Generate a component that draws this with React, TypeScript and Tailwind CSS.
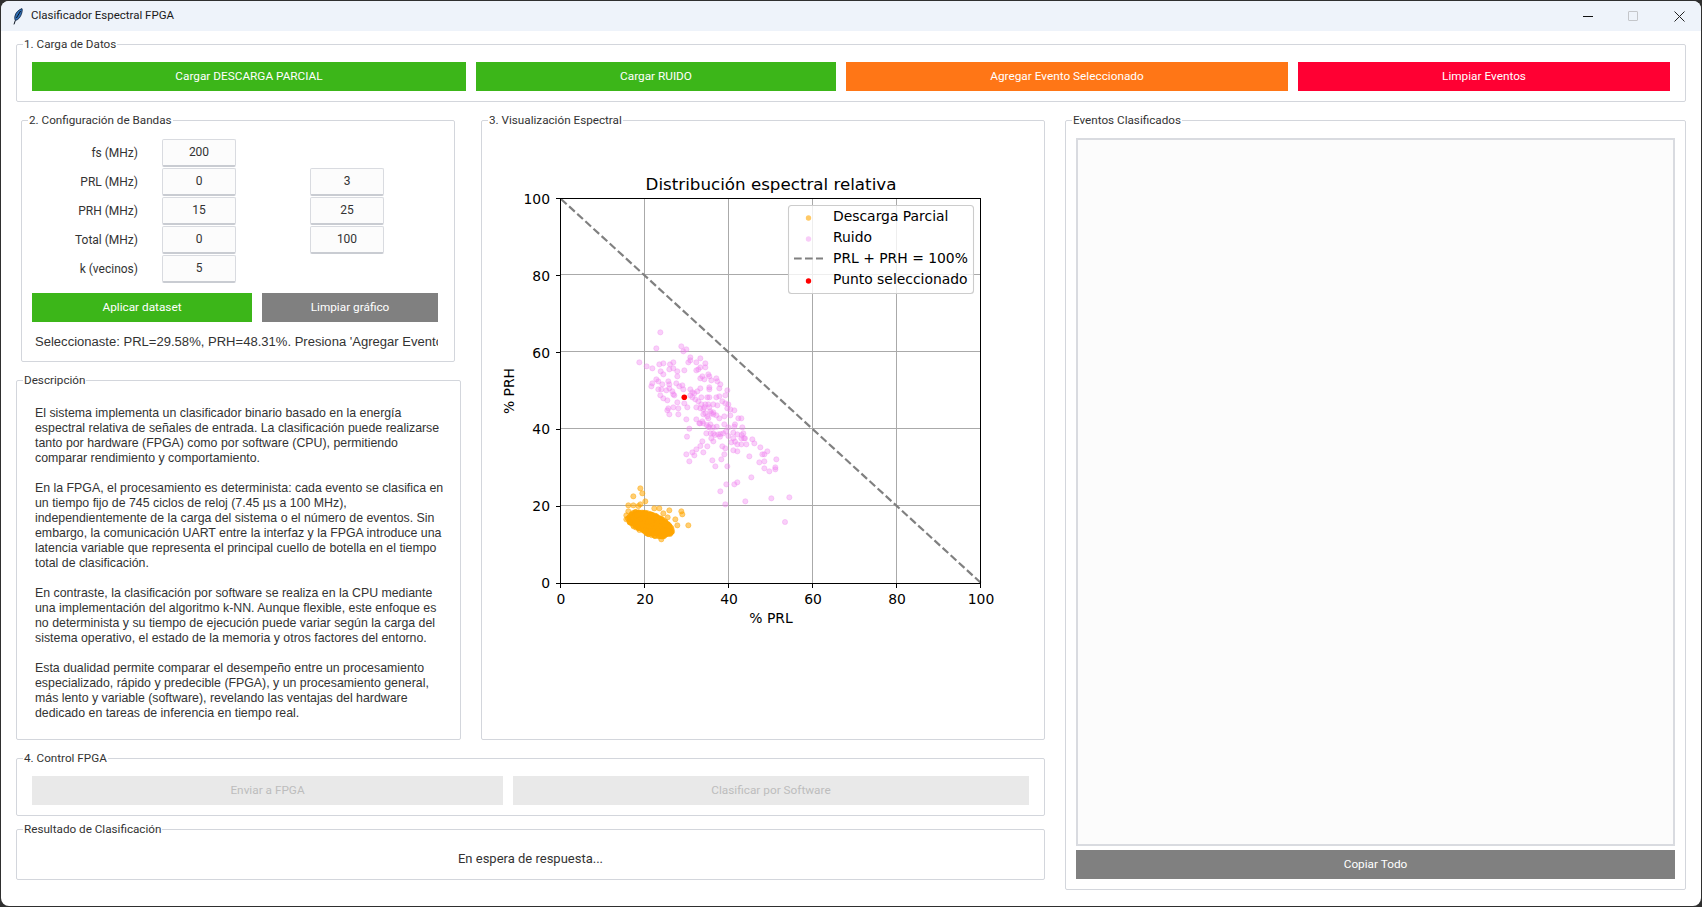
const uiFont = 'font-["Roboto",sans-serif]'

const pinkZoom: [number, number][] = [
  [121,67],[109,115],[184,109],[199,118],[190,124],[58,157],[80,169],[97,175],[118,163],[130,160],[150,163],[160,157],
  [148,178],[160,175],[172,184],[193,181],[172,199],[122,184],[130,193],[109,208],[115,214],[97,220],[94,229],[115,238],
  [124,238],[127,223],[145,214],[148,223],[148,235],[139,241],[121,256],[130,265],[142,271],[157,244],[163,256],[169,220],
  [178,229],[187,226],[190,238],[160,253],[172,277],[193,280],[202,292],[175,295],[160,292],[145,295],[142,301],[148,313],
  [175,313],[199,328],[211,238],[205,157],[211,142],[211,151],[229,157],[241,145],[256,160],[256,172],[241,172],[235,178],
  [229,181],[241,205],[247,199],[253,208],[265,193],[268,199],[274,211],[289,205],[292,214],[301,223],[298,235],[322,241],
  [268,232],[268,238],[241,235],[232,244],[223,250],[217,247],[211,256],[217,262],[226,268],[235,274],[244,262],[262,262],
  [268,262],[289,262],[298,259],[316,256],[307,274],[316,280],[325,283],[331,298],[343,301],[322,295],[292,286],[280,283],
  [265,283],[256,283],[253,292],[250,298],[241,295],[229,292],[244,283],[268,292],[271,304],[274,310],[280,313],[289,316],
  [298,325],[313,319],[331,316],[280,307],[256,310],[250,313],[262,319],[265,325],[229,328],[238,340],[250,340],[247,334],
  [271,343],[280,352],[268,352],[259,370],[272,370],[295,373],[302,372],[310,370],[318,364],[313,343],[325,352],[345,343],
  [343,350],[355,325],[364,325],[367,352],[370,370],[375,385],[364,385],[352,373],[340,368],[340,385],[352,403],[364,403],
  [379,403],[397,388],[403,400],[421,412],[442,424],[433,433],[427,433],[388,439],[352,424],[340,421],[334,397],[316,415],
  [307,409],[313,433],[304,448],[277,451],[286,469],[322,469],[250,427],[223,436],[217,427],[199,433],[208,454],[229,418],
  [241,408],[247,394],[262,409],[280,394],[274,385],[201,380],[208,356],[433,454],[418,457],[433,475],[448,484],[466,478],
  [466,472],[469,448],[394,502],[343,523],[352,517],[319,523],[301,544],[376,574],[454,565],[508,562],[316,583],[280,370],
  [265,350],[240,340],[290,350],[260,345],[300,380],[285,375],[325,378],[345,395],[365,375],[372,385],[495,636],
]

const orangeZoom: [number, number][] = [
  [121,55],[127,70],[100,79],[85,106],[100,106],[136,94],[121,103],[115,108],[85,124],[79,136],[79,148],[163,115],[178,115],
  [208,121],[244,124],[247,133],[226,148],[232,166],[265,166],[203,142],[163,196],[184,208],[106,126],[190,130],
]

// dense part of the orange cluster, stable between renders
const orangeBlob: [number, number][] = []
let seed = 7
const rnd = () => {
  seed = (seed * 16807) % 2147483647
  return seed / 2147483647
}
const tilt = 0.36
for (let i = 0; i < 520; i++) {
  const a = rnd() * Math.PI * 2
  const r = Math.sqrt(rnd())
  const u = Math.cos(a) * r * 70
  const v = Math.sin(a) * r * 30
  orangeBlob.push([150 + u * Math.cos(tilt) - v * Math.sin(tilt), 163 + u * Math.sin(tilt) + v * Math.cos(tilt)])
}

const description = [
  ['El sistema implementa un clasificador binario basado en la energía', 'espectral relativa de señales de entrada. La clasificación puede realizarse', 'tanto por hardware (FPGA) como por software (CPU), permitiendo', 'comparar rendimiento y comportamiento.'],
  ['En la FPGA, el procesamiento es determinista: cada evento se clasifica en', 'un tiempo fijo de 745 ciclos de reloj (7.45 µs a 100 MHz),', 'independientemente de la carga del sistema o el número de eventos. Sin', 'embargo, la comunicación UART entre la interfaz y la FPGA introduce una', 'latencia variable que representa el principal cuello de botella en el tiempo', 'total de clasificación.'],
  ['En contraste, la clasificación por software se realiza en la CPU mediante', 'una implementación del algoritmo k-NN. Aunque flexible, este enfoque es', 'no determinista y su tiempo de ejecución puede variar según la carga del', 'sistema operativo, el estado de la memoria y otros factores del entorno.'],
  ['Esta dualidad permite comparar el desempeño entre un procesamiento', 'especializado, rápido y predecible (FPGA), y un procesamiento general,', 'más lento y variable (software), revelando las ventajas del hardware', 'dedicado en tareas de inferencia en tiempo real.'],
]

function Group({ title, className, children }: { title: string; className: string; children?: React.ReactNode }) {
  return (
    <div className={`relative border border-[#d3d6dc] rounded-[2px] ${className}`}>
      <span className="absolute -top-[8px] left-[6px] bg-white px-px text-[11.7px] leading-[14px] text-[#333]">{title}</span>
      {children}
    </div>
  )
}

function Btn({ label, className }: { label: string; className: string }) {
  return (
    <div className={`h-[29px] flex items-center justify-center text-[11.8px] text-white ${className}`}>{label}</div>
  )
}

function Entry({ value }: { value: string }) {
  return (
    <div className="w-[74px] h-[28px] border border-[#d9dbe0] border-b-2 border-b-[#c9ccd2] rounded-[2px] bg-[#fcfcfc] flex items-center justify-center text-[12px] text-[#333]">
      {value}
    </div>
  )
}

function BandRow({ label, a, b }: { label: string; a: string; b?: string }) {
  return (
    <div className="flex items-center h-[29px]">
      <div className="w-[106px] text-right text-[12px] text-[#333]">{label}</div>
      <div className="ml-[24px]"><Entry value={a} /></div>
      {b && <div className="ml-[74px]"><Entry value={b} /></div>}
    </div>
  )
}

function Chart() {
  const gx = [645, 729, 813, 897]
  const gy = [506, 429, 352, 275]
  const xt = [0, 20, 40, 60, 80, 100]
  return (
    <svg viewBox="482 121 562 618" className="block w-full h-full" fontFamily='"DejaVu Sans", sans-serif' fill="#000">
      {gx.map((x) => <line key={x} x1={x - 0.5} x2={x - 0.5} y1={199} y2={583} stroke="#aaaaaa" strokeWidth={1} shapeRendering="crispEdges" />)}
      {gy.map((y) => <line key={y} x1={561} x2={981} y1={y - 0.5} y2={y - 0.5} stroke="#aaaaaa" strokeWidth={1} shapeRendering="crispEdges" />)}
      {orangeZoom.concat(orangeBlob).map(([x, y], i) => (
        <circle key={i} cx={600 + x / 3} cy={470 + y / 3} r={2.6} fill="#ffa500" fillOpacity={0.55} stroke="#ffa500" strokeOpacity={0.55} strokeWidth={0.8} />
      ))}
      {pinkZoom.map(([x, y], i) => (
        <circle key={i} cx={620 + x / 3} cy={310 + y / 3} r={2.6} fill="#ee82ee" fillOpacity={0.38} stroke="#ee82ee" strokeOpacity={0.38} strokeWidth={0.8} />
      ))}
      <line x1={561} y1={199} x2={981} y2={583} stroke="#808080" strokeWidth={2.2} strokeDasharray="7.7 3.3" />
      <circle cx={684.3} cy={397.3} r={2.8} fill="#ff0000" />
      <rect x={560.5} y={198.5} width={420} height={385} fill="none" stroke="#000" strokeWidth={1} shapeRendering="crispEdges" />
      {xt.map((v, i) => (
        <g key={v}>
          <line x1={560.5 + i * 84} x2={560.5 + i * 84} y1={583} y2={588} stroke="#000" strokeWidth={1} shapeRendering="crispEdges" />
          <text x={561 + i * 84} y={604} fontSize={13.9} textAnchor="middle">{v}</text>
          <line x1={556} x2={561} y1={583.5 - i * 77} y2={583.5 - i * 77} stroke="#000" strokeWidth={1} shapeRendering="crispEdges" />
          <text x={550} y={588 - i * 76.8} fontSize={13.9} textAnchor="end">{v}</text>
        </g>
      ))}
      <text x={771} y={190} fontSize={16.7} textAnchor="middle">Distribución espectral relativa</text>
      <text x={771} y={623} fontSize={13.9} textAnchor="middle">% PRL</text>
      <text x={514} y={391} fontSize={13.9} textAnchor="middle" transform="rotate(-90 514 391)">% PRH</text>
      <rect x={788.5} y={205.5} width={185} height={88} rx={3} fill="#fff" fillOpacity={0.8} stroke="#ccc" strokeWidth={1.1} />
      <circle cx={808.5} cy={218} r={2.7} fill="#ffa500" fillOpacity={0.6} />
      <circle cx={808.5} cy={239} r={2.7} fill="#ee82ee" fillOpacity={0.4} />
      <line x1={794} x2={823} y1={258.5} y2={258.5} stroke="#808080" strokeWidth={2.2} strokeDasharray="7.7 3.3" />
      <circle cx={808.5} cy={281} r={2.7} fill="#ff0000" />
      <text x={833} y={221} fontSize={13.9}>Descarga Parcial</text>
      <text x={833} y={242} fontSize={13.9}>Ruido</text>
      <text x={833} y={263} fontSize={13.9}>PRL + PRH = 100%</text>
      <text x={833} y={284} fontSize={13.9}>Punto seleccionado</text>
    </svg>
  )
}

export default function App() {
  return (
    <div className={`w-[1702px] h-[907px] bg-[#2f2f2f] overflow-hidden ${uiFont}`}>
      <div className="ml-px mt-px h-[905px] w-[1700px] bg-white rounded-[8px] overflow-hidden">
        <div className="h-[30px] bg-[#eef3fa] flex items-center">
          <svg width="10" height="17" viewBox="0 0 10 17" className="ml-[12px]">
            <path d="M9 .6C5.600 1.600 2.400 4.800 1.800 8.600c-.2 1.500 0 2.900.5 3.900 2.700-.5 4.800-2.800 6-6C9 4.500 9.600 2.300 9 .6Z" fill="#2f6fb5" stroke="#10233f" strokeWidth=".8" />
            <path d="M7.600 3 3.400 10M2.300 12.500 1 16.400" stroke="#0c1420" strokeWidth="1" fill="none" />
          </svg>
          <span className="ml-[8px] text-[11.5px] text-[#1a1a1a]">Clasificador Espectral FPGA</span>
          <div className="ml-auto flex items-center">
            <div className="w-[10px] h-px bg-[#111] mr-[35px]" />
            <div className="w-[10px] h-[10px] border border-[#c4c6ca] rounded-[1px] mr-[36px]" />
            <svg width="11" height="11" viewBox="0 0 11 11" className="mr-[16px]">
              <path d="M.5.5l10 10M10.500.5l-10 10" stroke="#222" strokeWidth="1" />
            </svg>
          </div>
        </div>

        <div className="pl-[15px] pt-[13px]">
          <Group title="1. Carga de Datos" className="w-[1670px] h-[58px] flex gap-[10px] pl-[15px] pt-[17px]">
            <Btn label="Cargar DESCARGA PARCIAL" className="w-[434px] bg-[#3cb619]" />
            <Btn label="Cargar RUIDO" className="w-[360px] bg-[#3cb619]" />
            <Btn label="Agregar Evento Seleccionado" className="w-[442px] bg-[#ff7616]" />
            <Btn label="Limpiar Eventos" className="w-[372px] bg-[#ff0033]" />
          </Group>

          <div className="flex gap-[20px] mt-[18px]">
            <div className="w-[1029px]">
              <div className="flex gap-[20px] h-[620px]">
                <div className="w-[445px]">
                  <Group title="2. Configuración de Bandas" className="ml-[5px] w-[434px] h-[242px]">
                    <div className="pl-[10px] pt-[17px]">
                      <BandRow label="fs (MHz)" a="200" />
                      <BandRow label="PRL (MHz)" a="0" b="3" />
                      <BandRow label="PRH (MHz)" a="15" b="25" />
                      <BandRow label="Total (MHz)" a="0" b="100" />
                      <BandRow label="k (vecinos)" a="5" />
                      <div className="flex gap-[10px] mt-[10px]">
                        <Btn label="Aplicar dataset" className="w-[220px] bg-[#3cb619]" />
                        <Btn label="Limpiar gráfico" className="w-[176px] bg-[#808080]" />
                      </div>
                      <div className="mt-[12px] ml-[3px] w-[403px] overflow-hidden whitespace-nowrap font-['Liberation_Sans',sans-serif] text-[13.05px] leading-[16px] text-[#333]">
                        Seleccionaste: PRL=29.58%, PRH=48.31%. Presiona 'Agregar Evento
                      </div>
                    </div>
                  </Group>
                  <Group title="Descripción" className="mt-[18px] h-[360px]">
                    <div className="pl-[18px] pt-[25px] font-['Liberation_Sans',sans-serif] text-[12.35px] leading-[15px] text-[#333] whitespace-nowrap">
                      {description.map((para, i) => (
                        <p key={i} className="mb-[15px]">
                          {para.map((line) => <span key={line} className="block">{line}</span>)}
                        </p>
                      ))}
                    </div>
                  </Group>
                </div>
                <Group title="3. Visualización Espectral" className="w-[564px] h-[620px]">
                  <Chart />
                </Group>
              </div>
              <Group title="4. Control FPGA" className="mt-[18px] h-[58px] flex gap-[10px] pl-[15px] pt-[17px]">
                <Btn label="Enviar a FPGA" className="w-[471px] bg-[#e9e9e9] !text-[#bdbdbd]" />
                <Btn label="Clasificar por Software" className="w-[516px] bg-[#e9e9e9] !text-[#bdbdbd]" />
              </Group>
              <Group title="Resultado de Clasificación" className="mt-[13px] h-[51px] flex items-center justify-center">
                <span className="text-[13px] text-[#333] mt-[9px]">En espera de respuesta...</span>
              </Group>
            </div>

            <Group title="Eventos Clasificados" className="w-[621px] h-[770px] flex flex-col px-[10px] pt-[17px]">
              <div className="h-[708px] border-2 border-[#d9dbe0] bg-[#fcfcfc]" />
              <Btn label="Copiar Todo" className="mt-[4px] bg-[#808080]" />
            </Group>
          </div>
        </div>
      </div>
    </div>
  )
}
